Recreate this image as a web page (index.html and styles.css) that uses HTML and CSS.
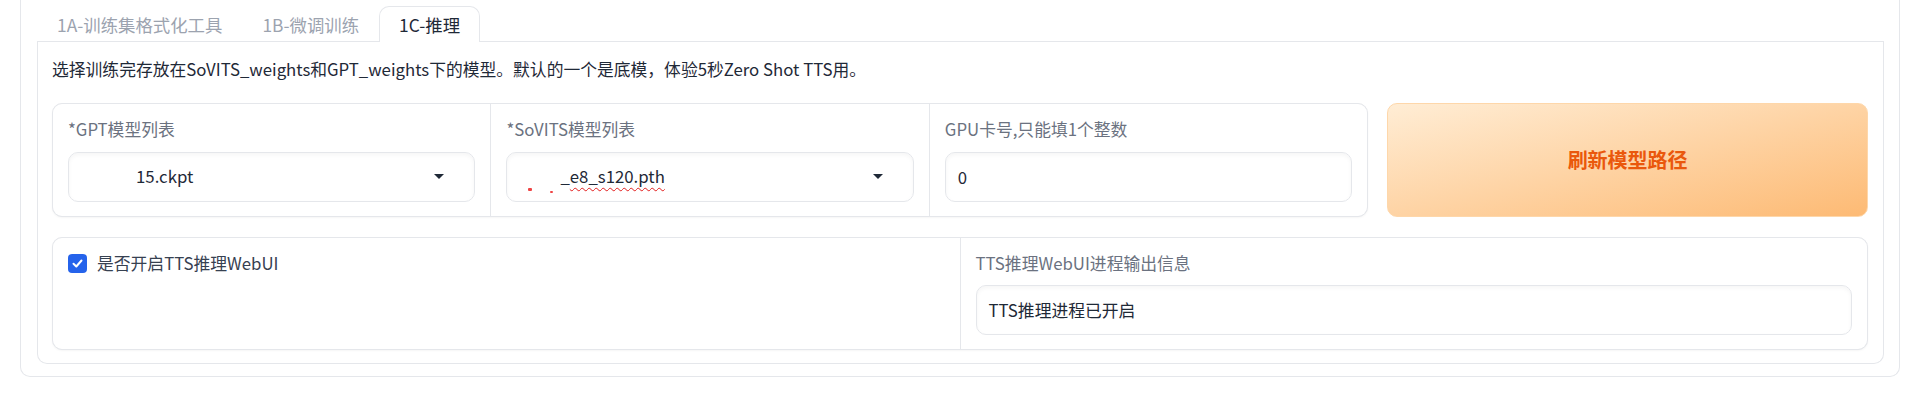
FILE: index.html
```html
<!DOCTYPE html>
<html>
  <head>
    <meta charset="utf-8">
    <title>1C-推理</title>
    <link rel="stylesheet" href="styles.css">
  </head>
  <body>
    <div class="panel">
      <div class="tab-nav">
        <button class="tab">1A-训练集格式化工具</button>
        <button class="tab">1B-微调训练</button>
        <button class="tab tab-selected">1C-推理</button>
      </div>
      <div class="tab-item">
        <p class="note">选择训练完存放在SoVITS_weights和GPT_weights下的模型。默认的一个是底模，体验5秒Zero Shot TTS用。</p>

        <div class="row">
          <div class="form form-3">
            <div class="field">
              <span class="label">*GPT模型列表</span>
              <div class="input select">
                <span><span class="blank blank-gpt"></span>15.ckpt</span>
                <svg class="arrow" width="10" height="5" viewBox="0 0 10 5"><path d="M0 0h10L5 5z" fill="#1f2937"/></svg>
              </div>
            </div>
            <div class="field">
              <span class="label">*SoVITS模型列表</span>
              <div class="input select">
                <span><span class="blank blank-sovits"><i class="mark"></i><i class="mark mark-2"></i></span>_<span class="typo">e8_s120.pth</span></span>
                <svg class="arrow" width="10" height="5" viewBox="0 0 10 5"><path d="M0 0h10L5 5z" fill="#1f2937"/></svg>
              </div>
            </div>
            <div class="field">
              <span class="label">GPU卡号,只能填1个整数</span>
              <div class="input">0</div>
            </div>
          </div>
          <button class="btn-primary">刷新模型路径</button>
        </div>

        <div class="form form-2">
          <div class="field">
            <label class="check">
              <span class="check-box">
                <svg width="11" height="9" viewBox="0 0 11 9"><path d="M1.5 4.8l2.8 2.7 5.2-6" fill="none" stroke="#fff" stroke-width="2" stroke-linecap="round" stroke-linejoin="round"/></svg>
              </span>
              是否开启TTS推理WebUI
            </label>
          </div>
          <div class="field">
            <span class="label">TTS推理WebUI进程输出信息</span>
            <div class="input">TTS推理进程已开启</div>
          </div>
        </div>
      </div>
    </div>
  </body>
</html>
```

FILE: styles.css
```css
* {
  box-sizing: border-box;
}

body {
  margin: 0;
  padding: 0;
  background: #fff;
  font-family: "Noto Sans CJK SC", "Noto Sans", sans-serif;
  font-size: 16.8px;
  line-height: 25px;
  color: #1f2937;
}

/* outer tab panel, its top edge is scrolled out of view */
.panel {
  margin-left: 20px;
  width: 1880px;
  padding: 6px 15px 12px 16px;
  border: 1px solid #e5e7eb;
  border-top: none;
  border-radius: 0 0 10px 10px;
}

.tab-nav {
  display: flex;
  border-bottom: 1px solid #e5e7eb;
}

.tab {
  margin: 0 0 -1px 0;
  padding: 5px 19px;
  border: 1px solid transparent;
  border-bottom: none;
  border-radius: 10px 10px 0 0;
  background: none;
  font-family: inherit;
  font-size: 17.4px;
  line-height: 25px;
  color: #9ca3af;
}

.tab-selected {
  border-color: #e5e7eb;
  background: #fff;
  color: #1f2937;
}

.tab-item {
  display: flex;
  flex-direction: column;
  gap: 20px;
  padding: 14px 15px 13px 14px;
  border: 1px solid #e5e7eb;
  border-top: none;
  border-radius: 0 0 10px 10px;
}

.note {
  margin: 0;
  line-height: 27px;
  color: #1f2937;
}

.row {
  display: grid;
  grid-template-columns: 1317fr 481fr;
  gap: 19px;
}

.form {
  display: grid;
  gap: 1px;
  background: #e5e7eb;
  border: 1px solid #e5e7eb;
  border-radius: 10px;
  overflow: hidden;
  box-shadow: 0 1px 2px rgba(0, 0, 0, .04);
}

.form-3 {
  grid-template-columns: 1fr 1fr 1fr;
}

.form-2 {
  grid-template-columns: 1fr 1fr;
}

.field {
  display: flex;
  flex-direction: column;
  padding: 13px 15px 14px 15px;
  background: #fff;
}

.label {
  margin-bottom: 9.6px;
  color: #6b7280;
}

.input {
  height: 50px;
  padding: 12px 12px;
  border: 1px solid #e5e7eb;
  border-radius: 10px;
  box-shadow: inset 0 2px 4px rgba(0, 0, 0, .04);
  color: #1f2937;
}

.select {
  display: flex;
  align-items: center;
  justify-content: space-between;
}

.arrow {
  margin-right: 18px;
}

.blank {
  display: inline-block;
  position: relative;
  height: 1px;
}

.blank-gpt {
  width: 55px;
}

.blank-sovits {
  width: 41px;
}

/* leftovers of the spell-check line under the hidden part */
.mark {
  position: absolute;
  left: 9px;
  top: 6px;
  width: 4px;
  height: 3px;
  border-radius: 1px;
  background: #ef4444;
}

.mark-2 {
  left: 31px;
  top: 9px;
  width: 3px;
  height: 2px;
}

.typo {
  text-decoration: underline wavy #e11d1d;
  text-decoration-thickness: 1px;
  text-underline-offset: 4px;
  text-decoration-skip-ink: none;
}

.btn-primary {
  padding: 0 16px;
  border: 1px solid #fed7aa;
  border-radius: 10px;
  background: linear-gradient(to bottom right, #ffedd5, #fdba74);
  font-family: inherit;
  font-size: 20px;
  font-weight: 700;
  color: #ea580c;
}

.check {
  display: flex;
  align-items: center;
  gap: 10px;
  color: #374151;
}

.check-box {
  display: flex;
  align-items: center;
  justify-content: center;
  width: 19px;
  height: 19px;
  border-radius: 4px;
  background: #2563eb;
}
```
